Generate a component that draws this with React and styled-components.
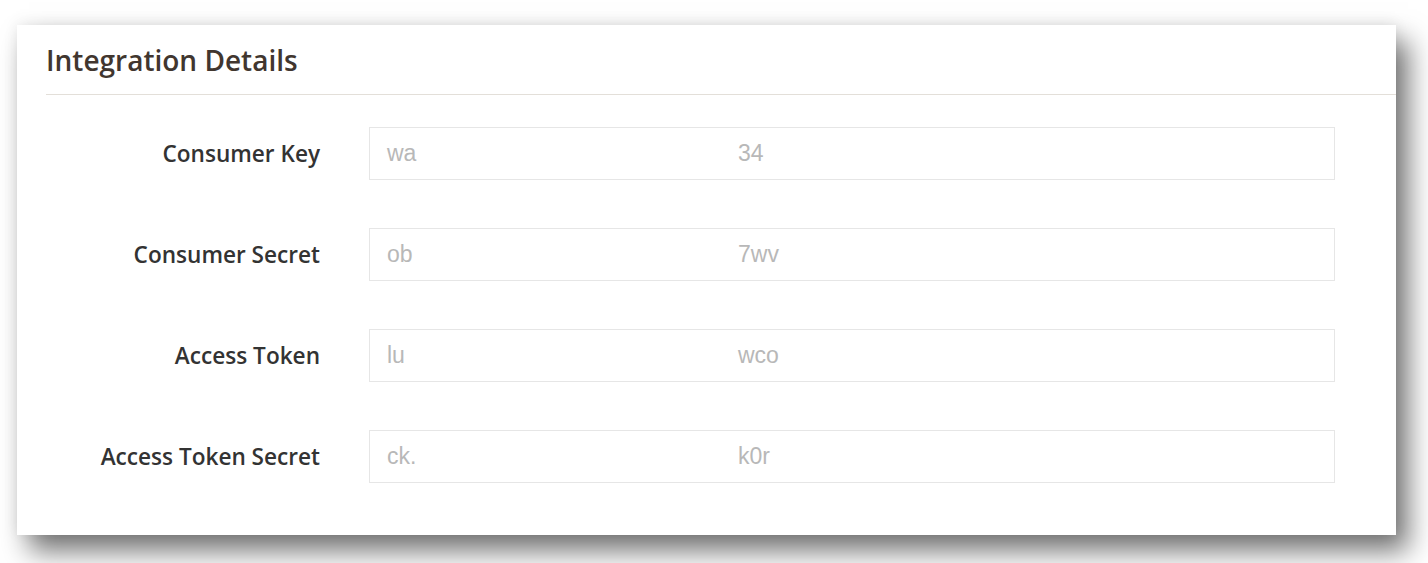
import React from "react";
import styled, { createGlobalStyle } from "styled-components";

const GlobalStyle = createGlobalStyle`
  html, body {
    margin: 0;
    padding: 0;
    background: #ffffff;
  }
  body {
    font-family: "Open Sans", "Noto Sans", sans-serif;
    -webkit-font-smoothing: antialiased;
  }
`;

const Page = styled.div`
  width: 1428px;
  height: 563px;
  box-sizing: border-box;
  padding: 25px 0 0 17px;
  overflow: hidden;
  background: #ffffff;
`;

const Card = styled.section`
  width: 1379px;
  height: 510px;
  box-sizing: border-box;
  background: #ffffff;
  display: flex;
  flex-direction: column;
  box-shadow: 0 -2px 14px rgba(0, 0, 0, 0.07),
    12px 16px 26px rgba(0, 0, 0, 0.55);
`;

const Header = styled.header`
  margin-left: 29px;
  height: 70px;
  box-sizing: border-box;
  border-bottom: 1px solid #e3dfd9;
  display: flex;
  align-items: flex-end;
  padding-bottom: 19px;
`;

const Title = styled.h2`
  margin: 0;
  font-family: "Open Sans", sans-serif;
  font-weight: 600;
  font-size: 28px;
  line-height: 30px;
  color: #41362f;
  white-space: nowrap;
`;

const Body = styled.div`
  display: flex;
  flex-direction: column;
  gap: 48px;
  padding: 32px 61px 0 0;
`;

const Row = styled.div`
  display: grid;
  grid-template-columns: 303px 1fr;
  column-gap: 49px;
  align-items: center;
`;

const Label = styled.label`
  text-align: right;
  font-family: "Open Sans", sans-serif;
  font-weight: 600;
  font-size: 22.6px;
  color: #333333;
  white-space: nowrap;
`;

const Field = styled.div`
  height: 53px;
  box-sizing: border-box;
  border: 1px solid #e6e6e6;
  background: #ffffff;
  display: grid;
  grid-template-columns: 351px 1fr;
  align-items: center;
  padding-left: 17px;
  font-family: "Liberation Sans", Arial, sans-serif;
  font-size: 23px;
  color: #b8b8b8;
`;

const Part = styled.span`
  white-space: nowrap;
`;

const rows = [
  { label: "Consumer Key", start: "wa", end: "34" },
  { label: "Consumer Secret", start: "ob", end: "7wv" },
  { label: "Access Token", start: "lu", end: "wco" },
  { label: "Access Token Secret", start: "ck.", end: "k0r" },
];

export default function App() {
  return (
    <>
      <GlobalStyle />
      <Page>
        <Card>
          <Header>
            <Title>Integration Details</Title>
          </Header>
          <Body>
            {rows.map((r) => (
              <Row key={r.label}>
                <Label>{r.label}</Label>
                <Field>
                  <Part>{r.start}</Part>
                  <Part>{r.end}</Part>
                </Field>
              </Row>
            ))}
          </Body>
        </Card>
      </Page>
    </>
  );
}
